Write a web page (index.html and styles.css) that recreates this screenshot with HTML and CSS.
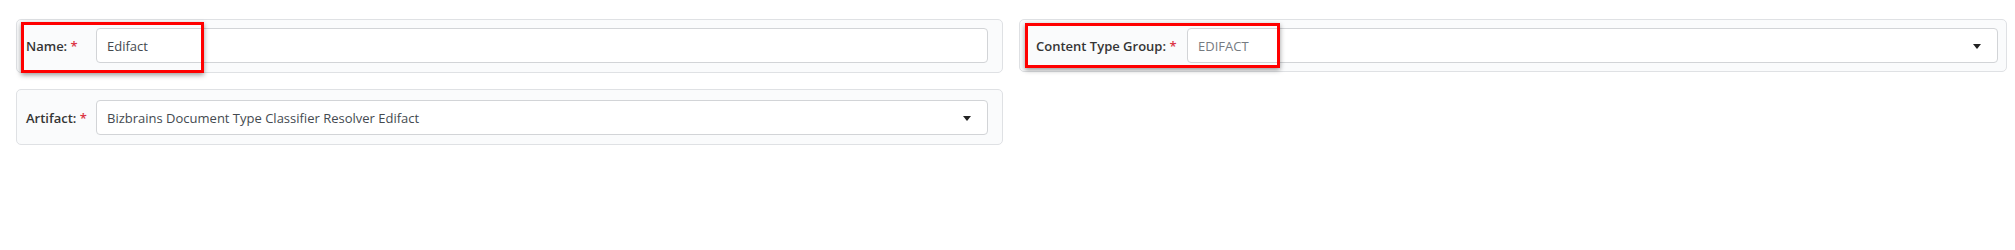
FILE: index.html
```html
<!DOCTYPE html>
<html lang="en">
<head>
<meta charset="utf-8">
<title>Form</title>
<link rel="stylesheet" href="styles.css">
</head>
<body>
<div class="page">
  <div class="grid">
    <div class="card card-left">
      <label class="lbl lbl-short">Name: <span class="req">*</span></label>
      <div class="ctl">Edifact</div>
    </div>
    <div class="card card-right">
      <label class="lbl lbl-long">Content Type Group: <span class="req">*</span></label>
      <div class="ctl ctl-select ctl-muted">EDIFACT<span class="caret"></span></div>
    </div>
    <div class="card card-left card-tall">
      <label class="lbl lbl-short">Artifact: <span class="req">*</span></label>
      <div class="ctl ctl-select">Bizbrains Document Type Classifier Resolver Edifact<span class="caret"></span></div>
    </div>
  </div>
  <div class="mark mark-a"></div>
  <div class="mark mark-b"></div>
</div>
</body>
</html>
```

FILE: styles.css
```css
* { box-sizing: border-box; }
html, body { margin: 0; padding: 0; background: #ffffff; }
body {
  font-family: "Open Sans", "Liberation Sans", sans-serif;
  font-size: 13px;
  color: #212529;
}
.page {
  position: relative;
  width: 2015px;
  height: 250px;
  padding: 19px 9px 0 16px;
}
.grid {
  display: grid;
  grid-template-columns: 987px 988px;
  column-gap: 16px;
  row-gap: 16px;
  align-items: start;
}
.card {
  display: flex;
  align-items: center;
  background: #fafbfc;
  border: 1px solid #dfe1e4;
  border-radius: 5px;
  padding: 8px 14px 9px 9px;
}
.card-right { padding-left: 16px; padding-right: 8px; padding-bottom: 8px; }
.card-tall { padding-top: 10px; padding-bottom: 9px; }
.lbl {
  flex: none;
  font-weight: 600;
  color: #353535;
  white-space: nowrap;
}
.lbl-short { width: 70px; }
.lbl-long { width: 151px; }
.req { color: #dc3545; font-weight: 600; }
.ctl {
  flex: 1;
  position: relative;
  height: 35px;
  display: flex;
  align-items: center;
  background: #ffffff;
  border: 1px solid #d2d4d7;
  border-radius: 4px;
  padding: 0 10px;
  color: #444a50;
  white-space: nowrap;
}
.ctl-muted { color: #767b81; }
.caret {
  position: absolute;
  right: 16px;
  top: 50%;
  margin-top: -2px;
  width: 0;
  height: 0;
  border-left: 4px solid transparent;
  border-right: 4px solid transparent;
  border-top: 5px solid #222222;
}
.mark {
  position: absolute;
  border: 3px solid #ff0000;
  box-shadow: 0 2px 5px rgba(0, 0, 0, 0.4);
}
.mark-a { left: 21px; top: 22px; width: 183px; height: 51px; }
.mark-b { left: 1025px; top: 23px; width: 255px; height: 45px; }
```
